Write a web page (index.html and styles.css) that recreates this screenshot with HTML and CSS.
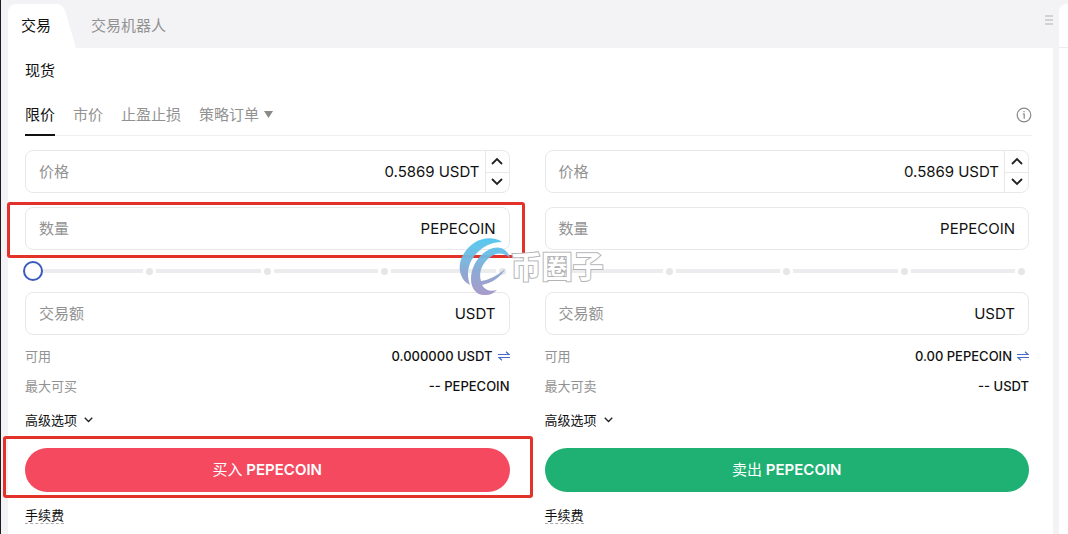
FILE: index.html
```html
<!DOCTYPE html>
<html lang="zh-CN">
<head>
<meta charset="utf-8">
<meta name="viewport" content="width=device-width, initial-scale=1">
<title>交易</title>
<link rel="stylesheet" href="styles.css">
</head>
<body>
<svg class="defs" width="0" height="0" aria-hidden="true">
  <symbol id="chev-up" viewBox="0 0 12 8"><path d="M1 7 L6 2 L11 7"/></symbol>
  <symbol id="chev-down" viewBox="0 0 12 8"><path d="M1 1 L6 6 L11 1"/></symbol>
  <symbol id="swap" viewBox="0 0 12 10"><path d="M0 3.5 H11 L8 .8 M12 6.5 H1 L4 9.2"/></symbol>
</svg>
<div class="workspace">
  <main class="panel">
    <header class="panel-head">
      <nav class="tabs">
        <a class="tab tab-active" href="#trade">交易<svg class="tab-edge" viewBox="0 0 12 44" preserveAspectRatio="none" aria-hidden="true"><path d="M0 0 C3 1 4 4 5 8 L12 44 H0 Z"/></svg></a>
        <a class="tab" href="#bot">交易机器人</a>
      </nav>
      <button class="drag" aria-label="菜单"><span></span><span></span><span></span></button>
    </header>
    <section class="content">
      <h1 class="market">现货</h1>
      <nav class="order-types">
        <a class="type type-active" href="#limit">限价</a>
        <a class="type" href="#market">市价</a>
        <a class="type" href="#stop">止盈止损</a>
        <a class="type" href="#strategy">策略订单<svg class="caret" viewBox="0 0 9 7" aria-hidden="true"><path d="M0 0 H9 L4.5 7 Z"/></svg></a>
        <button class="info" aria-label="说明"><svg viewBox="0 0 16 16"><circle cx="8" cy="8" r="6.8"/><path d="M6.7 7 H8.2 V11.7 M8 4 V5.3"/></svg></button>
      </nav>
      <div class="forms">
        <form class="order">
          <div class="field field-price">
            <label for="buy-price">价格</label>
            <input id="buy-price" type="text" value="0.5869">
            <span class="unit">USDT</span>
            <div class="stepper">
              <button type="button" aria-label="增加"><svg><use href="#chev-up"/></svg></button>
              <button type="button" aria-label="减少"><svg><use href="#chev-down"/></svg></button>
            </div>
          </div>
          <div class="field">
            <label for="buy-qty">数量</label>
            <input id="buy-qty" type="text">
            <span class="unit">PEPECOIN</span>
            <div class="mark mark-field"></div>
          </div>
          <div class="slider">
            <div class="rail"><i></i><b></b><i></i><b></b><i></i><b></b><i></i><b></b></div>
            <input type="range" min="0" max="100" value="0" aria-label="买入比例">
          </div>
          <div class="field">
            <label for="buy-total">交易额</label>
            <input id="buy-total" type="text">
            <span class="unit">USDT</span>
          </div>
          <div class="stats">
            <div class="stat"><span class="stat-name">可用</span><span class="stat-value">0.000000 USDT</span><svg class="swap" aria-hidden="true"><use href="#swap"/></svg></div>
            <div class="stat"><span class="stat-name">最大可买</span><span class="stat-value">-- PEPECOIN</span></div>
          </div>
          <button class="advanced" type="button">高级选项<svg><use href="#chev-down"/></svg></button>
          <div class="submit-wrap">
            <button class="submit buy" type="button"><span class="action">买入</span> PEPECOIN</button>
            <div class="mark mark-submit"></div>
          </div>
          <a class="fee" href="#fee">手续费</a>
        </form>
        <form class="order">
          <div class="field field-price">
            <label for="sell-price">价格</label>
            <input id="sell-price" type="text" value="0.5869">
            <span class="unit">USDT</span>
            <div class="stepper">
              <button type="button" aria-label="增加"><svg><use href="#chev-up"/></svg></button>
              <button type="button" aria-label="减少"><svg><use href="#chev-down"/></svg></button>
            </div>
          </div>
          <div class="field">
            <label for="sell-qty">数量</label>
            <input id="sell-qty" type="text">
            <span class="unit">PEPECOIN</span>
          </div>
          <div class="slider">
            <div class="rail"><i></i><b></b><i></i><b></b><i></i><b></b><i></i><b></b></div>
            <input type="range" min="0" max="100" value="0" aria-label="卖出比例">
            <div class="watermark">
              <svg viewBox="0 0 52 58" aria-hidden="true">
                <defs><linearGradient id="wm" gradientUnits="userSpaceOnUse" x1="0" y1="0" x2="0" y2="58"><stop offset="0" stop-color="#4fc6ee"/><stop offset=".3" stop-color="#6cbce4"/><stop offset=".6" stop-color="#8aa4d0"/><stop offset="1" stop-color="#a596c8"/></linearGradient></defs>
                <path fill="url(#wm)" d="M43 4 C36 -1 24 -1 15 5 C3 13 -2 27 2 37 C4 42 7 45 11 47 C7 36 9 25 17 16 C24 8 33 4 43 4 Z"/>
                <path fill="url(#wm)" d="M51 20 C49 12 42 8 34 10 C23 13 12 26 12 41 C12 51 18 58 27 57 C31 57 35 55 38 52 C31 54 26 52 23 47 C33 45 42 39 46 31 C38 38 30 42 22 43 C19 34 24 23 33 18 C39 14 46 15 51 20 Z"/>
              </svg>
              <span>币圈子</span>
            </div>
          </div>
          <div class="field">
            <label for="sell-total">交易额</label>
            <input id="sell-total" type="text">
            <span class="unit">USDT</span>
          </div>
          <div class="stats">
            <div class="stat"><span class="stat-name">可用</span><span class="stat-value">0.00 PEPECOIN</span><svg class="swap" aria-hidden="true"><use href="#swap"/></svg></div>
            <div class="stat"><span class="stat-name">最大可卖</span><span class="stat-value">-- USDT</span></div>
          </div>
          <button class="advanced" type="button">高级选项<svg><use href="#chev-down"/></svg></button>
          <div class="submit-wrap">
            <button class="submit sell" type="button"><span class="action">卖出</span> PEPECOIN</button>
          </div>
          <a class="fee" href="#fee">手续费</a>
        </form>
      </div>
    </section>
  </main>
  <aside class="side"><div class="side-head"></div></aside>
</div>
</body>
</html>
```
FILE: styles.css
```css
* { box-sizing: border-box; }
body {
  margin: 0;
  background: #f3f3f5;
  color: #111;
  font: 15px/20px Inter, "Noto Sans CJK SC", sans-serif;
  overflow: hidden;
}
.defs { position: absolute; }
button { padding: 0; border: 0; background: none; font: inherit; color: inherit; cursor: pointer; }
a { color: inherit; text-decoration: none; }
svg { fill: none; flex: none; }

.workspace {
  display: flex;
  gap: 6px;
  min-height: 100vh;
  padding: 4px 0 0 7px;
  border-left: 1px solid #1c1c1e;
}
.panel { flex: 1; display: flex; flex-direction: column; }
.panel-head { display: flex; justify-content: space-between; height: 44px; }
.tabs { display: flex; gap: 28px; }
.tab { display: flex; align-items: center; color: #929292; }
.tab-active {
  position: relative;
  padding: 0 7px 0 13px;
  margin-right: 5px;
  border-radius: 8px 0 0 0;
  background: #fff;
  color: #111;
}
.tab-edge { position: absolute; left: 100%; top: 0; width: 18px; height: 100%; fill: #fff; }
.drag { display: flex; flex-direction: column; gap: 2px; padding: 11px 0 0; align-items: center; width: 8px; }
.drag span { width: 8px; height: 2px; background: #d2d2d4; }
.content { flex: 1; padding: 13px 21px 0 17px; background: #fff; }
.market { margin: 0 0 14px; font-size: 15px; line-height: 20px; font-weight: 400; }
.order-types {
  display: flex;
  gap: 18px;
  height: 41px;
  border-bottom: 1px solid #efeff0;
  color: #929292;
}
.type { display: flex; align-items: center; gap: 5px; height: 41px; border-bottom: 2px solid transparent; }
.type-active { color: #111; border-color: #111; }
.caret { width: 9px; height: 7px; fill: #8a8a8a; }
.info { margin-left: auto; height: 40px; display: flex; align-items: center; }
.info svg { width: 16px; height: 16px; stroke: #888; stroke-width: 1.2; }

.forms { display: grid; grid-template-columns: 1fr 1fr; gap: 35px; padding: 14px 3px 0 0; }
.order { display: flex; flex-direction: column; min-width: 0; }
.field {
  position: relative;
  display: flex;
  align-items: center;
  height: 43px;
  padding: 0 13px;
  border: 1px solid #e8e8ea;
  border-radius: 8px;
}
.field-price { padding-right: 0; margin-bottom: 14px; }
.field label { color: #929292; }
.field input {
  flex: 1;
  min-width: 0;
  padding: 0;
  border: 0;
  outline: 0;
  background: none;
  color: #111;
  font: inherit;
  text-align: right;
}
.unit { margin-left: 4px; }
.stepper { display: grid; grid-template-rows: 1fr 1fr; width: 24px; height: 100%; margin-left: 5px; border-left: 1px solid #e8e8ea; }
.stepper button { display: flex; align-items: center; justify-content: center; }
.stepper button + button { border-top: 1px solid #e8e8ea; }
.stepper svg { width: 12px; height: 8px; stroke: #222; stroke-width: 1.8; }

.slider { position: relative; height: 42px; }
.rail { display: flex; align-items: center; gap: 3px; height: 100%; padding: 0 4px 0 14px; }
.rail i { flex: 1; height: 4px; background: #ececef; }
.rail b { width: 7px; height: 7px; border-radius: 50%; background: #e6e6e8; }
.slider input {
  appearance: none;
  position: absolute;
  inset: 11px -2px;
  width: calc(100% + 4px);
  height: 20px;
  margin: 0;
  background: none;
}
.slider input::-webkit-slider-thumb {
  appearance: none;
  width: 20px;
  height: 20px;
  border: 2px solid #3a5bbd;
  border-radius: 50%;
  background: #fff;
}

.stats { display: grid; gap: 10px; padding-top: 11px; font-size: 13px; }
.stat { display: flex; align-items: center; }
.stat-name { color: #929292; }
.stat-value { margin-left: auto; font-weight: 500; }
.swap { width: 12px; height: 10px; margin-left: 5px; stroke: #4a6cc8; stroke-width: 1.2; }
.advanced { display: flex; align-items: center; align-self: start; gap: 7px; margin: 14px 0 18px; font-size: 13px; line-height: 20px; }
.advanced svg { width: 9px; height: 6px; stroke: #222; stroke-width: 1.8; }
.submit-wrap { position: relative; }
.submit { display: block; width: 100%; height: 44px; border-radius: 22px; color: #fff; font-weight: 600; }
.action { font-weight: 400; }
.buy { background: #f5495f; }
.sell { background: #1eb173; }
.fee { align-self: start; margin-top: 15px; border-bottom: 1px dashed #aaa; font-size: 13px; line-height: 16px; }

.mark { position: absolute; border: 3px solid #e3322a; border-radius: 3px; pointer-events: none; }
.mark-field { inset: -6px -16px -9px -19px; }
.mark-submit { inset: -12px -23px -6px -22px; }

.watermark { position: absolute; left: -86px; top: -12px; display: flex; align-items: center; pointer-events: none; }
.watermark svg { width: 52px; height: 58px; opacity: .95; }
.watermark span {
  color: #fff;
  font-size: 31px;
  font-weight: 700;
  line-height: 40px;
  white-space: nowrap;
  -webkit-text-stroke: 2px #b4b4b6;
  paint-order: stroke fill;
}

.side { width: 9px; border-radius: 8px 0 0 0; background: #fff; }
.side-head { height: 44px; border-bottom: 1px solid #ececee; }
```
